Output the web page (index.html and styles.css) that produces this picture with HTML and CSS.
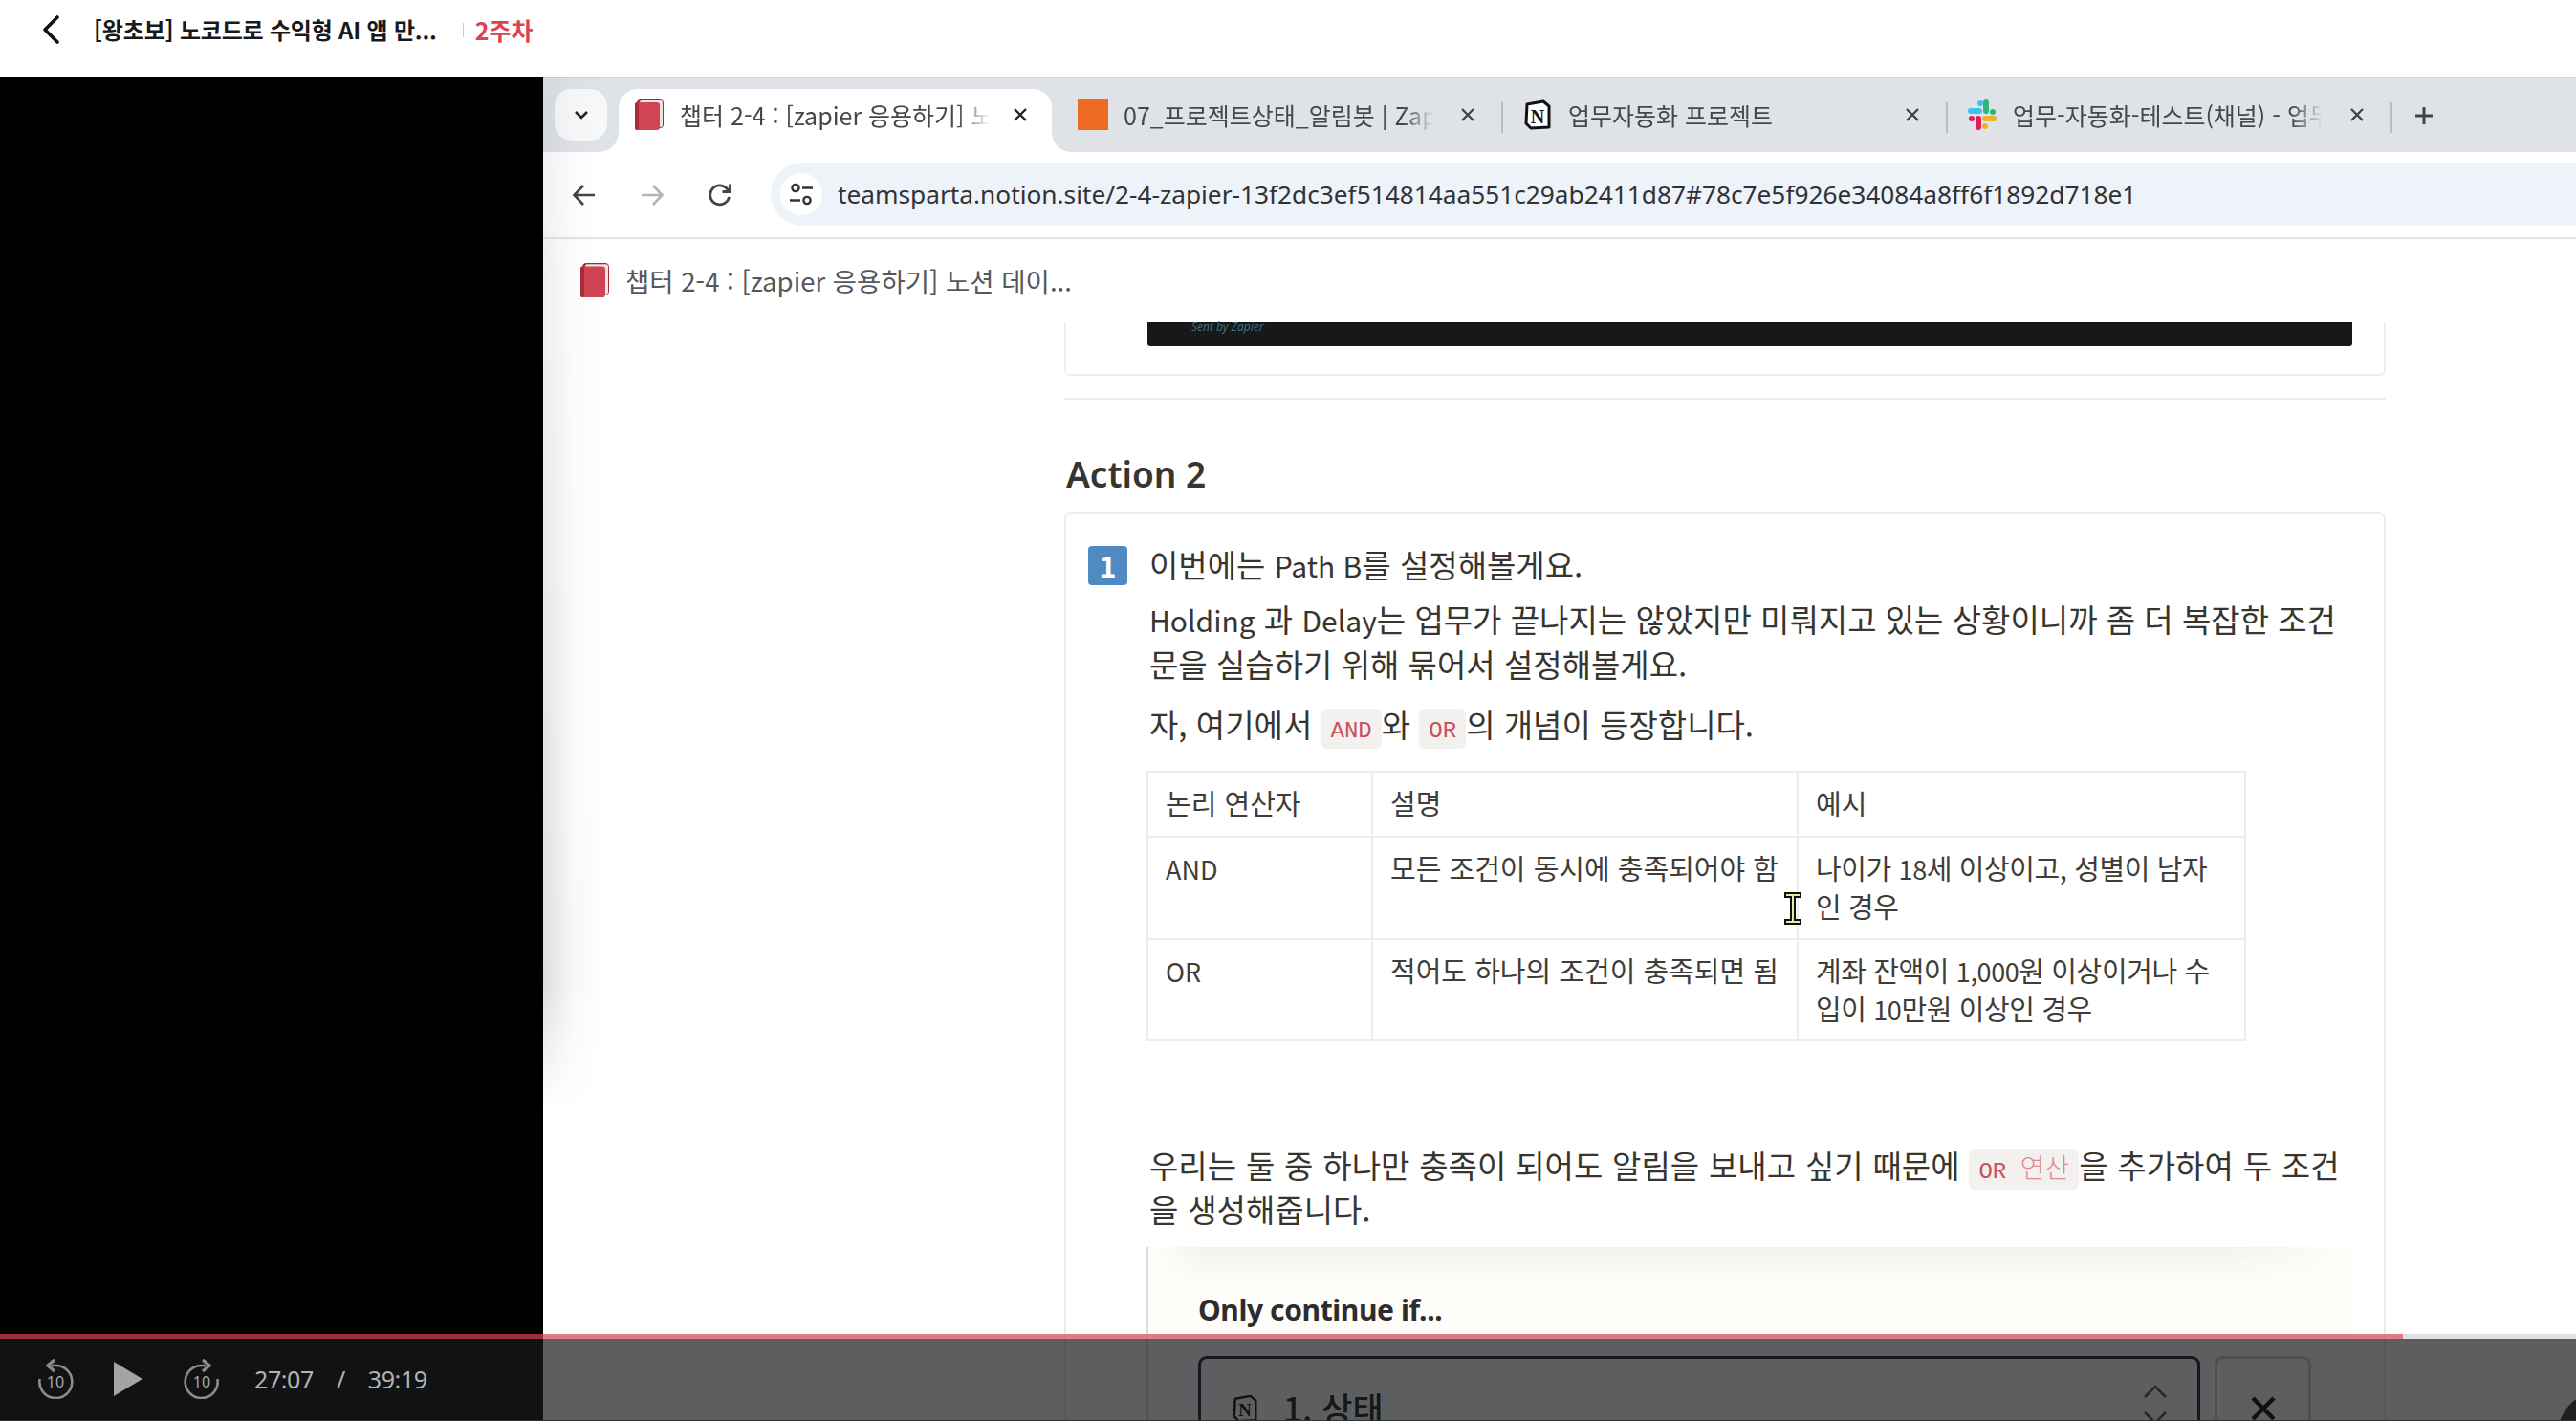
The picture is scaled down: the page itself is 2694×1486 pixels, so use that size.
FILE: index.html
```html
<!DOCTYPE html>
<html lang="ko">
<head>
<meta charset="utf-8">
<title>2주차</title>
<link rel="stylesheet" href="styles.css">
</head>
<body>
<header class="lesson-bar">
  <svg class="lesson-back" width="20" height="30" viewBox="0 0 20 30"><path d="M17 2 L4 15 L17 28" fill="none" stroke="#111" stroke-width="3.6" stroke-linecap="round" stroke-linejoin="round"/></svg>
  <span class="lesson-title">[왕초보] 노코드로 수익형 AI 앱 만...</span>
  <span class="lesson-sep"></span>
  <span class="lesson-week">2주차</span>
</header>
<main class="stage">
  <div class="video-pad"></div>
  <section class="screen">
    <div class="tabstrip">
      <button class="tab-menu"><svg width="16" height="10" viewBox="0 0 16 10"><path d="M2 2 L8 8 L14 2" fill="none" stroke="#222" stroke-width="2.6"/></svg></button>
      <div class="tab tab-active">
        <svg class="favicon" width="32" height="32" viewBox="0 0 32 32"><rect x="3" y="0" width="28" height="30" rx="4" fill="#a52a36"/><rect x="6" y="1" width="24" height="28" rx="2" fill="#efe3e3"/><rect x="1" y="3" width="26" height="29" rx="3" fill="#cf4553"/><rect x="1" y="3" width="4" height="29" rx="2" fill="#a92c3a"/></svg>
        <span class="tab-title">챕터 2-4 : [zapier 응용하기] 노</span>
        <svg class="tab-close" width="16" height="16" viewBox="0 0 16 16"><path d="M2 2 L14 14 M14 2 L2 14" stroke="#222" stroke-width="2.4"/></svg>
      </div>
      <div class="tab tab-second">
        <svg class="favicon" width="32" height="32" viewBox="0 0 32 32"><rect width="32" height="32" fill="#ef6a24"/></svg>
        <span class="tab-title">07_프로젝트상태_알림봇 | Zapi</span>
        <svg class="tab-close" width="16" height="16" viewBox="0 0 16 16"><path d="M2 2 L14 14 M14 2 L2 14" stroke="#444" stroke-width="2.4"/></svg>
      </div>
      <span class="tab-sep"></span>
      <div class="tab">
        <svg class="favicon" width="32" height="32" viewBox="0 0 32 32"><path d="M5 5 L22 2 L28 7 L28 29 L9 30 L4 25 Z" fill="#fff" stroke="#111" stroke-width="3" stroke-linejoin="round"/><text x="16" y="25" text-anchor="middle" class="n-mark">N</text></svg>
        <span class="tab-title">업무자동화 프로젝트</span>
        <svg class="tab-close" width="16" height="16" viewBox="0 0 16 16"><path d="M2 2 L14 14 M14 2 L2 14" stroke="#444" stroke-width="2.4"/></svg>
      </div>
      <span class="tab-sep"></span>
      <div class="tab">
        <svg class="favicon" width="32" height="32" viewBox="0 0 32 32">
          <path d="M20 3 V12" stroke="#2eb67d" stroke-width="6" stroke-linecap="round"/><circle cx="27" cy="13" r="3" fill="#2eb67d"/>
          <path d="M4 12 H13" stroke="#36c5f0" stroke-width="6" stroke-linecap="round"/><circle cx="14" cy="4" r="3" fill="#36c5f0"/>
          <path d="M19 20 H28" stroke="#ecb22e" stroke-width="6" stroke-linecap="round"/><circle cx="19" cy="28" r="3" fill="#ecb22e"/>
          <path d="M12 20 V29" stroke="#e01e5a" stroke-width="6" stroke-linecap="round"/><circle cx="5" cy="20" r="3" fill="#e01e5a"/>
        </svg>
        <span class="tab-title">업무-자동화-테스트(채널) - 업무</span>
        <svg class="tab-close" width="16" height="16" viewBox="0 0 16 16"><path d="M2 2 L14 14 M14 2 L2 14" stroke="#444" stroke-width="2.4"/></svg>
      </div>
      <span class="tab-sep"></span>
      <svg class="tab-plus" width="20" height="20" viewBox="0 0 20 20"><path d="M10 1 V19 M1 10 H19" stroke="#444" stroke-width="3"/></svg>
    </div>
    <div class="toolbar">
      <svg class="nav-icon" width="26" height="26" viewBox="0 0 26 26"><path d="M24 13 H3 M12 3 L2.5 13 L12 23" fill="none" stroke="#444" stroke-width="2.6"/></svg>
      <svg class="nav-icon" width="26" height="26" viewBox="0 0 26 26"><path d="M2 13 H23 M14 3 L23.5 13 L14 23" fill="none" stroke="#b4b4b4" stroke-width="2.6"/></svg>
      <svg class="nav-icon" width="26" height="26" viewBox="0 0 26 26"><path d="M22.5 15 A10 10 0 1 1 20 6 L23 9 M23.5 1.5 V9.5 H15.5" fill="none" stroke="#444" stroke-width="2.8"/></svg>
      <div class="address">
        <span class="site-info"><svg width="26" height="26" viewBox="0 0 26 26"><circle cx="7" cy="6.5" r="3.6" fill="none" stroke="#333" stroke-width="2.4"/><path d="M14 6.5 H25 M1 19.5 H12" stroke="#333" stroke-width="2.4"/><circle cx="19" cy="19.5" r="3.6" fill="none" stroke="#333" stroke-width="2.4"/></svg></span>
        <span class="url">teamsparta.notion.site/2-4-zapier-13f2dc3ef514814aa551c29ab2411d87#78c7e5f926e34084a8ff6f1892d718e1</span>
      </div>
    </div>
    <div class="page-topbar">
      <svg class="favicon" width="32" height="36" viewBox="0 0 32 32" preserveAspectRatio="none"><rect x="3" y="0" width="28" height="30" rx="4" fill="#a52a36"/><rect x="6" y="1" width="24" height="28" rx="2" fill="#efe3e3"/><rect x="1" y="3" width="26" height="29" rx="3" fill="#cf4553"/><rect x="1" y="3" width="4" height="29" rx="2" fill="#a92c3a"/></svg>
      <span class="page-name">챕터 2-4 : [zapier 응용하기] 노션 데이...</span>
    </div>
    <article class="page">
      <div class="prev-card"><div class="prev-image"><span class="prev-caption">Sent by Zapier</span></div></div>
      <hr class="divider">
      <h2 class="heading">Action 2</h2>
      <div class="callout">
        <div class="callout-row">
          <span class="badge">1</span>
          <div class="callout-body">
            <p class="line">이번에는 <span class="lat">Path B</span>를 설정해볼게요.</p>
            <p class="line para-gap-s"><span class="lat">Holding</span> 과 <span class="lat">Delay</span>는 업무가 끝나지는 않았지만 미뤄지고 있는 상황이니까 좀 더 복잡한 조건<br>문을 실습하기 위해 묶어서 설정해볼게요.</p>
            <p class="line para-gap-m">자, 여기에서 <code class="chip">AND</code>와 <code class="chip">OR</code>의 개념이 등장합니다.</p>
            <table class="logic">
              <colgroup><col class="col-a"><col class="col-b"><col class="col-c"></colgroup>
              <tr class="row-head"><td>논리 연산자</td><td>설명</td><td>예시</td></tr>
              <tr class="row-and"><td><span class="lat-t">AND</span></td><td>모든 조건이 동시에 충족되어야 함</td><td class="cell-tight">나이가 <span class="lat-t">18</span>세 이상이고, 성별이 남자<br>인 경우</td></tr>
              <tr class="row-or"><td><span class="lat-t">OR</span></td><td>적어도 하나의 조건이 충족되면 됨</td><td class="cell-tight">계좌 잔액이 <span class="lat-t">1,000</span>원 이상이거나 수<br>입이 <span class="lat-t">10</span>만원 이상인 경우</td></tr>
            </table>
            <p class="line para-gap-l para-wide">우리는 둘 중 하나만 충족이 되어도 알림을 보내고 싶기 때문에 <code class="chip">OR <span class="chip-ko">연산</span></code>을 추가하여 두 조건<br>을 생성해줍니다.</p>
            <figure class="shot">
              <div class="shot-shade"></div>
              <div class="shot-title">Only continue if...</div>
              <div class="shot-row">
                <div class="shot-select">
                  <svg class="shot-n" width="30" height="32" viewBox="0 0 32 32"><path d="M5 5 L22 2 L28 7 L28 29 L9 30 L4 25 Z" fill="#fff" stroke="#111" stroke-width="2.6" stroke-linejoin="round"/><text x="16" y="25" text-anchor="middle" class="n-mark">N</text></svg>
                  <span class="shot-value">1. 상태</span>
                  <svg class="shot-chevrons" width="28" height="44" viewBox="0 0 28 44"><path d="M3 14 L14 3 L25 14 M3 30 L14 41 L25 30" fill="none" stroke="#555" stroke-width="2.6"/></svg>
                </div>
                <div class="shot-remove"><svg width="28" height="28" viewBox="0 0 28 28"><path d="M3 3 L25 25 M25 3 L3 25" stroke="#111" stroke-width="4.5"/></svg></div>
              </div>
            </figure>
          </div>
        </div>
      </div>
    </article>
    <svg class="text-cursor" width="20" height="36" viewBox="0 0 20 36"><path d="M2 2 H18 V6 H12 V30 H18 V34 H2 V30 H8 V6 H2 Z" fill="#e9e7b0" stroke="#111" stroke-width="2"/></svg>
  </section>
</main>
<div class="player">
  <div class="progress"><span class="played-dark"></span><span class="played-light"></span><span class="unplayed"></span></div>
  <div class="player-bar">
    <div class="controls">
      <svg class="ctl-skip" width="38" height="42" viewBox="0 0 38 42"><path d="M15 7 H19 A17 17 0 1 1 2.6 21" fill="none" stroke="#8c8c8c" stroke-width="2.6"/><path d="M18 1 L11 7 L18 13" fill="none" stroke="#8c8c8c" stroke-width="3.4"/><text x="19" y="30" text-anchor="middle" class="skip-num">10</text></svg>
      <svg class="ctl-play" width="30" height="36" viewBox="0 0 30 36"><path d="M0 0 L30 18 L0 36 Z" fill="#a4a4a4"/></svg>
      <svg class="ctl-skip" width="38" height="42" viewBox="0 0 38 42"><path d="M23 7 H19 A17 17 0 1 0 35.4 21" fill="none" stroke="#8c8c8c" stroke-width="2.6"/><path d="M20 1 L27 7 L20 13" fill="none" stroke="#8c8c8c" stroke-width="3.4"/><text x="19" y="30" text-anchor="middle" class="skip-num">10</text></svg>
      <span class="time">27:07</span><span class="time time-slash">/</span><span class="time">39:19</span>
    </div>
    <div class="veil"><span class="veil-knob"></span></div>
  </div>
</div>
</body>
</html>
```
FILE: styles.css
```css
* { box-sizing: border-box; }
html, body { margin: 0; padding: 0; }
body {
  width: 2694px;
  height: 1486px;
  overflow: hidden;
  position: relative;
  background: #fff;
  color: #37352f;
  font-family: "Noto Sans CJK KR", "Noto Sans", sans-serif;
}

/* lesson header */
.lesson-bar {
  height: 81px;
  display: flex;
  align-items: flex-start;
  padding: 16px 0 0 43px;
  background: #fff;
  border-bottom: 1px solid #d8dbde;
}
.lesson-title {
  margin-left: 35px;
  font-size: 24px;
  line-height: 30px;
  font-weight: 700;
  color: #17191c;
  letter-spacing: -0.2px;
  white-space: nowrap;
}
.lesson-sep { width: 1px; height: 15px; margin: 8px 0 0 27px; background: #c9c9c9; }
.lesson-week {
  margin-left: 12px;
  font-size: 25px;
  line-height: 30px;
  font-weight: 700;
  color: #e0404f;
}

/* stage */
.stage { display: flex; height: 1405px; }
.video-pad { width: 568px; flex: none; background: #000; }
.screen { flex: 1; position: relative; min-width: 0; overflow: hidden; background: #fff; }
.screen::before {
  content: "";
  position: absolute;
  z-index: 3;
  left: 0;
  top: 0;
  width: 62px;
  height: 1080px;
  background: linear-gradient(to right, rgba(0,0,0,.13), rgba(0,0,0,.03) 50%, rgba(0,0,0,0));
  -webkit-mask-image: linear-gradient(to bottom, rgba(0,0,0,.35), #000 88%, rgba(0,0,0,0));
  mask-image: linear-gradient(to bottom, rgba(0,0,0,.35), #000 88%, rgba(0,0,0,0));
  pointer-events: none;
}

/* tab strip */
.tabstrip {
  height: 78px;
  display: flex;
  align-items: flex-start;
  padding: 11px 0 0 12px;
  background: #dfe3e8;
  border-top: 1px solid #c8d2d6;
}
.tab-menu {
  width: 55px;
  height: 54px;
  margin-right: 12px;
  padding: 0;
  border: 0;
  border-radius: 18px;
  background: #f7f8fa;
  display: flex;
  align-items: center;
  justify-content: center;
}
.tab {
  width: 459px;
  height: 66px;
  flex: none;
  position: relative;
  display: flex;
  align-items: flex-start;
  padding: 11px 0 0 16px;
}
.tab-active {
  width: 453px;
  background: #fff;
  border-radius: 20px 20px 0 0;
  margin-right: 11px;
}
.tab-active::before,
.tab-active::after {
  content: "";
  position: absolute;
  bottom: 0;
  width: 20px;
  height: 20px;
}
.tab-active::before { left: -20px; background: radial-gradient(circle at 0 0, transparent 19.5px, #fff 20px); }
.tab-active::after { right: -20px; background: radial-gradient(circle at 100% 0, transparent 19.5px, #fff 20px); }
.favicon { flex: none; display: block; }
.tab-title {
  width: 324px;
  margin-left: 16px;
  flex: none;
  font-size: 25px;
  line-height: 32px;
  color: #45474a;
  white-space: nowrap;
  overflow: hidden;
  -webkit-mask-image: linear-gradient(to right, #000 90%, transparent);
  mask-image: linear-gradient(to right, #000 90%, transparent);
}
.tab-close { flex: none; margin: 8px 0 0 28px; }
.tab-active .tab-close { margin-left: 24px; }
.tab-sep { width: 2px; height: 32px; margin: 14px 4px 0 0; background: #b9bcc0; flex: none; }
.tab-plus { margin: 18px 0 0 19px; flex: none; }

/* toolbar */
.toolbar {
  height: 91px;
  display: flex;
  align-items: center;
  padding: 0 0 0 30px;
  background: #fff;
  border-top-left-radius: 18px;
  border-bottom: 2px solid #e4e4e4;
  position: relative;
}
.nav-icon { flex: none; margin-right: 45px; }
.nav-icon:nth-child(3) { margin-right: 40px; }
.address {
  flex: 1;
  height: 66px;
  margin-bottom: 2px;
  display: flex;
  align-items: center;
  padding-left: 10px;
  background: #eef2f9;
  border-radius: 33px 0 0 33px;
}
.site-info {
  width: 44px;
  height: 44px;
  border-radius: 50%;
  background: #fff;
  display: flex;
  align-items: center;
  justify-content: center;
  flex: none;
}
.url {
  margin-left: 16px;
  font-family: "Noto Sans", sans-serif;
  font-size: 26.25px;
  color: #303236;
  white-space: nowrap;
}

/* page title bar */
.page-topbar {
  height: 87px;
  display: flex;
  align-items: center;
  padding: 0 0 2px 38px;
  background: #fff;
}
.page-name {
  margin-left: 16px;
  font-size: 27.5px;
  color: #55575a;
  white-space: nowrap;
}

/* article */
.page { width: 1382px; margin-left: 545px; }
.prev-card {
  height: 56px;
  padding: 0 33px 0 85px;
  border: 2px solid #efefef;
  border-top: 0;
  border-radius: 0 0 6px 6px;
}
.prev-image {
  height: 25px;
  background: #16181a;
  border-radius: 0 0 3px 3px;
  padding-left: 46px;
}
.prev-caption {
  display: block;
  font-family: "Noto Sans", sans-serif;
  font-size: 12px;
  line-height: 10px;
  color: #3f6e80;
  font-style: italic;
}
.divider { height: 2px; margin: 23px 0 0; border: 0; background: #ececec; }
.heading {
  margin: 0;
  padding: 53px 0 0 2px;
  font-family: "Noto Sans", sans-serif;
  font-size: 37px;
  line-height: 50px;
  font-weight: 600;
  color: #37352f;
}
.callout {
  margin-top: 14px;
  padding: 30px 0 0 23px;
  height: 1000px;
  border: 2px solid #ececec;
  border-bottom: 0;
  border-radius: 8px 8px 0 0;
}
.callout-row { display: flex; align-items: flex-start; }
.badge {
  width: 41px;
  height: 41px;
  margin: 4px 23px 0 0;
  flex: none;
  border-radius: 4px;
  background: #4f8bc2;
  color: #fff;
  font-size: 30px;
  line-height: 41px;
  font-weight: 700;
  text-align: center;
}
.callout-body { flex: 1; min-width: 0; }
.line {
  margin: 0;
  font-size: 33px;
  line-height: 46px;
  white-space: nowrap;
  color: #37352f;
}
.lat { font-size: 30px; }
.lat-t { font-size: 27px; }
.para-gap-s { margin-top: 10px; }
.para-gap-m { margin-top: 17px; }
.para-gap-l { margin-top: 106px; }
.para-wide { word-spacing: 0.6px; }
.chip {
  padding: 10px 10px 5px;
  font-family: "Liberation Mono", "Noto Sans CJK KR", monospace;
  font-size: 24px;
  line-height: 1;
  word-spacing: 0;
  color: #c84f5b;
  background: #f2f1ef;
  border-radius: 6px;
}
.chip-ko { color: #dc8a92; font-family: "Noto Sans CJK KR", sans-serif; font-size: 28px; font-weight: 300; }

/* table */
.logic {
  margin: 26px 0 0 -3px;
  width: 1148px;
  table-layout: fixed;
  border-collapse: collapse;
}
.col-a { width: 235px; }
.col-b { width: 445px; }
.col-c { width: 468px; }
.logic td {
  padding: 12px 0 0 18px;
  border: 2px solid #ededed;
  font-size: 29px;
  line-height: 39px;
  vertical-align: top;
  white-space: nowrap;
  color: #3f3d38;
}
.logic td.cell-tight { letter-spacing: -0.4px; }
.row-head { height: 68px; }
.row-and { height: 107px; }
.row-or { height: 106px; }

/* embedded screenshot */
.shot {
  margin: 17px 0 0 -3px;
  height: 220px;
  width: 1261px;
  position: relative;
  padding: 41px 0 0 52px;
  background: #fefdfa;
  border-left: 2px solid #dcdcdc;
}
.shot-shade {
  position: absolute;
  top: 0;
  left: 10px;
  right: 10px;
  height: 36px;
  background: linear-gradient(to bottom, #f1f1ee, rgba(241,241,238,0));
  -webkit-mask-image: linear-gradient(to right, transparent, #000 4%, #000 90%, transparent);
  mask-image: linear-gradient(to right, transparent, #000 4%, #000 90%, transparent);
}
.shot-title {
  font-family: "Noto Sans", sans-serif;
  font-size: 30px;
  line-height: 50px;
  font-weight: 700;
  color: #2d2d2d;
  letter-spacing: -0.4px;
}
.shot-row { display: flex; margin-top: 23px; }
.shot-select {
  width: 1048px;
  height: 100px;
  display: flex;
  align-items: flex-start;
  padding: 36px 0 0 31px;
  border: 3px solid #23283a;
  border-radius: 9px;
  background: #fff;
  position: relative;
}
.shot-value {
  margin-left: 25px;
  margin-top: -3px;
  font-size: 35px;
  line-height: 36px;
  font-weight: 500;
  color: #222;
}
.shot-chevrons { position: absolute; right: 30px; top: 26px; }
.shot-remove {
  width: 101px;
  height: 100px;
  margin-left: 15px;
  padding-top: 38px;
  display: flex;
  justify-content: center;
  align-items: flex-start;
  border: 3px solid #cfcfcf;
  border-radius: 9px;
  background: #fff;
}
.n-mark {
  font-family: "Liberation Serif", serif;
  font-size: 20px;
  font-weight: 700;
  fill: #111;
}
.text-cursor { position: absolute; z-index: 4; left: 1297px; top: 851px; }

/* player */
.player {
  position: absolute;
  z-index: 5;
  left: 0;
  right: 0;
  bottom: 0;
  height: 91px;
  display: flex;
  flex-direction: column;
}
.progress { height: 5px; display: flex; flex: none; }
.played-dark { width: 568px; background: #9b303a; }
.played-light { width: 1945px; background: #e07a85; }
.unplayed { flex: 1; background: #e2e2e2; }
.player-bar { flex: 1; display: flex; border-bottom: 1px solid #333; }
.controls {
  width: 568px;
  flex: none;
  background: #101214;
  display: flex;
  align-items: center;
  padding: 0 0 1px 39px;
}
.ctl-skip { flex: none; }
.ctl-play { flex: none; margin: 0 43px 0 42px; }
.skip-num {
  font-family: "Noto Sans", sans-serif;
  font-size: 16px;
  fill: #a8a8a8;
}
.time {
  font-family: "Noto Sans", sans-serif;
  font-size: 25px;
  color: #b2b2b2;
  letter-spacing: -0.4px;
}
.ctl-skip + .time { margin-left: 36px; }
.time-slash { margin: 0 24px; }
.veil {
  flex: 1;
  background: rgba(16,18,20,.68);
  position: relative;
  overflow: hidden;
}
.veil-knob {
  position: absolute;
  right: -71px;
  top: 55px;
  width: 90px;
  height: 90px;
  border-radius: 50%;
  background: #1c1e20;
}
```
